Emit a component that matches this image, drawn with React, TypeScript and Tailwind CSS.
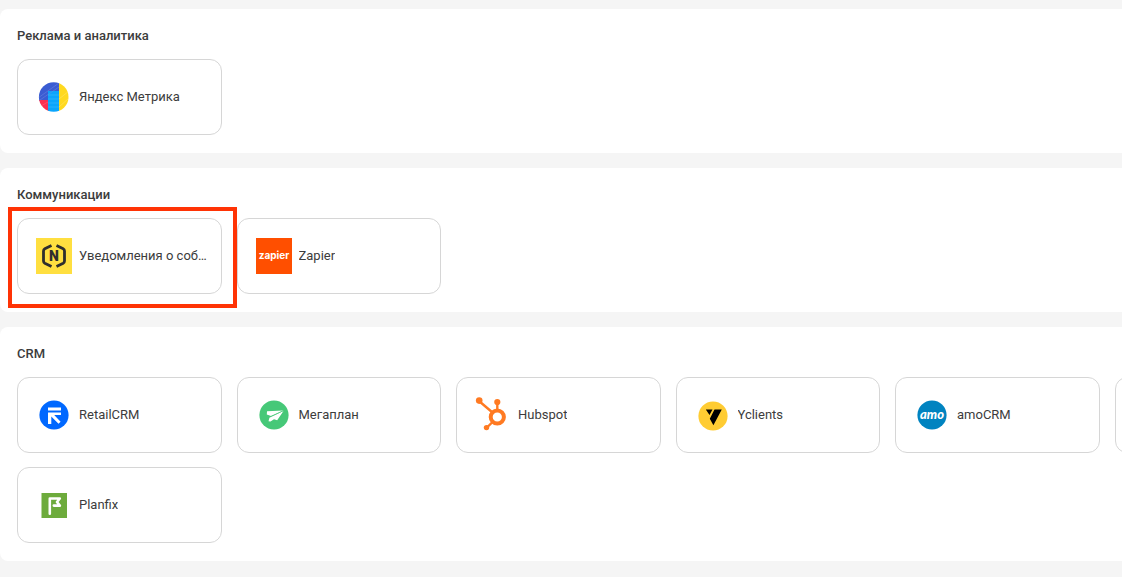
import React from 'react'

const MetrikaLogo = () => (
  <svg viewBox="0 0 36 36" className="size-9 shrink-0" aria-hidden="true">
    <defs>
      <clipPath id="metrika">
        <circle cx="17.7" cy="18" r="14.8" />
      </clipPath>
    </defs>
    <g clipPath="url(#metrika)">
      <rect width="23" height="22" fill="#3a5cd2" />
      <rect y="21" width="13" height="15" fill="#fc3050" />
      <rect x="23" width="13" height="36" fill="#ffd91f" />
      <rect x="12" y="12" width="11" height="24" fill="#0ba5fc" />
      <path d="M2 19 23 4M4 21 23 8" stroke="#7189e0" strokeWidth="0.5" />
      <path d="M12 16h11M12 20h11M12 24h11M12 28h11" stroke="#4bbcff" strokeWidth="0.5" />
      <path d="M23 20l10-8M23 28l10-9" stroke="#ffe668" strokeWidth="0.6" />
      <path d="M3 28l9-5" stroke="#ff6078" strokeWidth="0.6" />
    </g>
  </svg>
)

const NotifyLogo = () => (
  <svg viewBox="0 0 36 36" className="size-9 shrink-0" aria-hidden="true">
    <rect width="36" height="36" fill="#ffdf40" />
    <path
      d="M15.5 7.5 8.8 10.8Q7.5 11.5 7.5 13v10q0 1.5 1.3 2.2l6.7 3.3M20.5 7.5l6.7 3.3q1.3.7 1.3 2.2v10q0 1.5-1.3 2.2l-6.7 3.3"
      fill="none"
      stroke="#2e2e2e"
      strokeWidth="2.8"
    />
    <text x="18" y="23" textAnchor="middle" fontFamily="Roboto, sans-serif" fontSize="14" fontWeight="900" fill="#2e2e2e">N</text>
  </svg>
)

const ZapierLogo = () => (
  <svg viewBox="0 0 36 36" className="size-9 shrink-0" aria-hidden="true">
    <rect width="36" height="36" fill="#ff4f00" />
    <text x="18" y="21" textAnchor="middle" fontFamily="Inter, sans-serif" fontSize="10" fontWeight="700" fill="#fff">zapier</text>
  </svg>
)

const RetailLogo = () => (
  <svg viewBox="0 0 36 36" className="size-9 shrink-0" aria-hidden="true">
    <circle cx="18" cy="18" r="14.6" fill="#0068ff" />
    <path d="M12 10.5h13v3H12zM12 15.5h13v2.6h-6.8l6.4 6.6-2.1 2.1-7.2-7.4V27H12z" fill="#fff" />
  </svg>
)

const MegaplanLogo = () => (
  <svg viewBox="0 0 36 36" className="size-9 shrink-0" aria-hidden="true">
    <circle cx="18" cy="18" r="14.6" fill="#46c878" />
    <path d="M11 14.2l16.5-.7L15 19l-4.2-1.6zM27.5 14 21.2 23.2l-3.2-1-3.5 2.3-2-.2 1-3.8z" fill="#fff" />
    <path d="M27 13.8 13.5 20.2" stroke="#46c878" strokeWidth="0.7" />
  </svg>
)

const HubspotLogo = () => (
  <svg viewBox="0 0 36 36" className="size-9 shrink-0" aria-hidden="true">
    <g stroke="#ff7a22" fill="none">
      <circle cx="22.3" cy="20" r="6.6" strokeWidth="4" />
      <path d="M4 4l13.5 11.5M22.3 5v9M12 30.5l5.5-5.5" strokeWidth="2.4" />
    </g>
    <g fill="#ff7a22">
      <circle cx="4.2" cy="3.6" r="3.3" />
      <circle cx="22.3" cy="5" r="3.1" />
      <circle cx="11.5" cy="30.6" r="2.7" />
    </g>
  </svg>
)

const YclientsLogo = () => (
  <svg viewBox="0 0 36 36" className="size-9 shrink-0" aria-hidden="true">
    <circle cx="18" cy="19" r="14.6" fill="#ffcc33" />
    <path d="M10.8 12.5h6.7l-3 5.6zM19.5 12.5h7.3L18.4 28.3l-3.6-6.5z" fill="#000" />
  </svg>
)

const AmoLogo = () => (
  <svg viewBox="0 0 36 36" className="size-9 shrink-0" aria-hidden="true">
    <circle cx="18" cy="18" r="14.6" fill="#0083c0" />
    <text x="18" y="22" textAnchor="middle" fontFamily="Lato, sans-serif" fontSize="13" fontStyle="italic" fontWeight="900" fill="#fff">amo</text>
  </svg>
)

const PlanfixLogo = () => (
  <svg viewBox="0 0 36 36" className="size-9 shrink-0" aria-hidden="true">
    <rect x="5.5" y="6" width="25.5" height="25" fill="#6dab3c" />
    <path d="M13.8 26.8V11.5h10L21 15l2.8 3.6h-6" fill="none" stroke="#fff" strokeWidth="2.6" strokeLinecap="round" strokeLinejoin="round" />
  </svg>
)

interface Integration {
  name: string
  logo?: React.ReactNode
  selected?: boolean
}

const groups: { title: string; items: Integration[] }[] = [
  {
    title: 'Реклама и аналитика',
    items: [{ name: 'Яндекс Метрика', logo: <MetrikaLogo /> }],
  },
  {
    title: 'Коммуникации',
    items: [
      { name: 'Уведомления о соб…', logo: <NotifyLogo />, selected: true },
      { name: 'Zapier', logo: <ZapierLogo /> },
    ],
  },
  {
    title: 'CRM',
    items: [
      { name: 'RetailCRM', logo: <RetailLogo /> },
      { name: 'Мегаплан', logo: <MegaplanLogo /> },
      { name: 'Hubspot', logo: <HubspotLogo /> },
      { name: 'Yclients', logo: <YclientsLogo /> },
      { name: 'amoCRM', logo: <AmoLogo /> },
      { name: '' },
      { name: 'Planfix', logo: <PlanfixLogo /> },
    ],
  },
]

const Card = ({ name, logo, selected }: Integration) => (
  <div className="relative min-w-0">
    <button
      type="button"
      className="flex h-[76px] w-full cursor-pointer items-center gap-[7px] rounded-[12px] border border-[#d6d6d6] bg-white pr-2 pl-[18px] text-left"
    >
      {logo}
      <span className="truncate">{name}</span>
    </button>
    {selected && (
      <div className="pointer-events-none absolute -top-[11px] -right-[15px] -bottom-[14px] -left-[9px] z-10 border-4 border-[#ff3305]" />
    )}
  </div>
)

const App = () => {
  return (
    <main className="flex min-h-screen flex-col gap-[15px] overflow-hidden bg-[#f5f5f5] pt-[9px] pb-4 font-[Roboto,sans-serif] text-[13px] text-[#3c3c3c]">
      {groups.map((group) => (
        <section key={group.title} className="overflow-hidden rounded-l-lg bg-white px-[17px] pt-[17px] pb-[18px]">
          <h2 className="mb-[13px] leading-5 font-medium">{group.title}</h2>
          {/* six columns, the row runs past the right edge on narrow windows */}
          <div className="grid min-w-[1302px] grid-cols-6 gap-x-[15px] gap-y-[14px]">
            {group.items.map((item) => (
              <Card key={item.name} {...item} />
            ))}
          </div>
        </section>
      ))}
    </main>
  )
}

export default App
